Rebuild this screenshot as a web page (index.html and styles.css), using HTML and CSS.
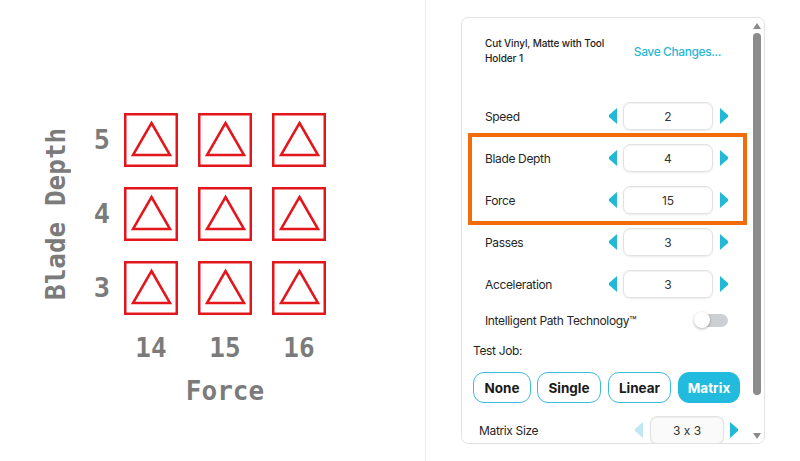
FILE: index.html
```html
<!DOCTYPE html>
<html>
<head>
<meta charset="utf-8">
<link rel="stylesheet" href="styles.css">
</head>
<body>
<div class="app">
  <section class="preview">
    <div class="chart">
      <div class="yaxis">Blade Depth</div>
      <div class="plot">
        <div class="mrow">
          <div class="rnum">5</div>
          <div class="cell"><svg viewBox="0 0 54 54"><rect x="1.25" y="1.25" width="51.5" height="51.5"/><polygon points="27.5,10 46,42 9,42"/></svg></div>
          <div class="cell"><svg viewBox="0 0 54 54"><rect x="1.25" y="1.25" width="51.5" height="51.5"/><polygon points="27.5,10 46,42 9,42"/></svg></div>
          <div class="cell"><svg viewBox="0 0 54 54"><rect x="1.25" y="1.25" width="51.5" height="51.5"/><polygon points="27.5,10 46,42 9,42"/></svg></div>
        </div>
        <div class="mrow">
          <div class="rnum">4</div>
          <div class="cell"><svg viewBox="0 0 54 54"><rect x="1.25" y="1.25" width="51.5" height="51.5"/><polygon points="27.5,10 46,42 9,42"/></svg></div>
          <div class="cell"><svg viewBox="0 0 54 54"><rect x="1.25" y="1.25" width="51.5" height="51.5"/><polygon points="27.5,10 46,42 9,42"/></svg></div>
          <div class="cell"><svg viewBox="0 0 54 54"><rect x="1.25" y="1.25" width="51.5" height="51.5"/><polygon points="27.5,10 46,42 9,42"/></svg></div>
        </div>
        <div class="mrow">
          <div class="rnum">3</div>
          <div class="cell"><svg viewBox="0 0 54 54"><rect x="1.25" y="1.25" width="51.5" height="51.5"/><polygon points="27.5,10 46,42 9,42"/></svg></div>
          <div class="cell"><svg viewBox="0 0 54 54"><rect x="1.25" y="1.25" width="51.5" height="51.5"/><polygon points="27.5,10 46,42 9,42"/></svg></div>
          <div class="cell"><svg viewBox="0 0 54 54"><rect x="1.25" y="1.25" width="51.5" height="51.5"/><polygon points="27.5,10 46,42 9,42"/></svg></div>
        </div>
        <div class="xnums">
          <div class="xnum">14</div>
          <div class="xnum">15</div>
          <div class="xnum">16</div>
        </div>
        <div class="xaxis">Force</div>
      </div>
    </div>
  </section>

  <section class="side">
    <div class="panel">
      <div class="content">
        <div class="header">
          <div class="material">Cut Vinyl, Matte with Tool Holder 1</div>
          <a class="save">Save Changes...</a>
        </div>

        <div class="rows">
          <div class="row">
            <span class="label">Speed</span>
            <span class="arrow left"></span>
            <span class="field">2</span>
            <span class="arrow right"></span>
          </div>
          <div class="row">
            <span class="label">Blade Depth</span>
            <span class="arrow left"></span>
            <span class="field">4</span>
            <span class="arrow right"></span>
          </div>
          <div class="row">
            <span class="label">Force</span>
            <span class="arrow left"></span>
            <span class="field">15</span>
            <span class="arrow right"></span>
          </div>
          <div class="row">
            <span class="label">Passes</span>
            <span class="arrow left"></span>
            <span class="field">3</span>
            <span class="arrow right"></span>
          </div>
          <div class="row">
            <span class="label">Acceleration</span>
            <span class="arrow left"></span>
            <span class="field">3</span>
            <span class="arrow right"></span>
          </div>
        </div>

        <div class="toggle-row">
          <span class="label">Intelligent Path Technology™</span>
          <span class="toggle"><span class="knob"></span></span>
        </div>

        <div class="testjob">Test Job:</div>
        <div class="buttons">
          <button class="btn">None</button>
          <button class="btn">Single</button>
          <button class="btn">Linear</button>
          <button class="btn active">Matrix</button>
        </div>

        <div class="matrix-row">
          <span class="label">Matrix Size</span>
          <span class="arrow left disabled"></span>
          <span class="field wide">3 x 3</span>
          <span class="arrow right"></span>
        </div>
      </div>
      <div class="scrollbar">
        <span class="sarrow up"></span>
        <span class="thumb"></span>
        <span class="sarrow down"></span>
      </div>
    </div>
    <div class="highlight"></div>
  </section>
</div>
</body>
</html>
```

FILE: styles.css
```css
* { box-sizing: border-box; }
html, body { margin: 0; padding: 0; background: #ffffff; }
body {
  width: 800px;
  height: 461px;
  overflow: hidden;
  font-family: "Inter", "Noto Sans", sans-serif;
  font-feature-settings: "calt" 0;
  color: #222;
}

.app { display: flex; height: 461px; }

/* ---------- left preview ---------- */
.preview {
  width: 426px;
  height: 461px;
  border-right: 1px solid #ececec;
  font-family: "DejaVu Sans Mono", monospace;
  font-weight: bold;
  color: #7b7b7b;
  font-size: 26px;
}
.chart { display: flex; padding: 113px 0 0 43px; }
.yaxis {
  writing-mode: vertical-rl;
  transform: rotate(180deg);
  width: 26px;
  height: 201px;
  line-height: 26px;
  text-align: center;
  white-space: nowrap;
}
.plot { display: flex; flex-direction: column; gap: 20px; }
.mrow { display: flex; gap: 20px; align-items: center; height: 54px; }
.rnum { width: 55px; padding-right: 14px; margin-right: -20px; text-align: right; line-height: 26px; font-size: 27px; }
.cell { width: 54px; height: 54px; }
.cell svg { display: block; width: 54px; height: 54px; }
.cell rect { fill: none; stroke: #e3161c; stroke-width: 2.5; }
.cell polygon { fill: none; stroke: #e3161c; stroke-width: 2.5; stroke-linejoin: miter; }
.xnums { display: flex; gap: 20px; padding-left: 55px; line-height: 26px; }
.xnum { width: 54px; text-align: center; }
.xaxis { padding-left: 55px; width: 257px; text-align: center; line-height: 26px; margin-top: -3px; }

/* ---------- right side ---------- */
.side { position: relative; flex: 1; padding: 17px 0 0 35px; }
.panel {
  width: 304px;
  height: 427px;
  border: 1px solid #e2e2e2;
  border-radius: 7px;
  display: flex;
  overflow: hidden;
  background: #fff;
}
.content { flex: 1; min-width: 0; padding: 18px 22px 0 11px; overflow: hidden; }
.header { display: flex; align-items: center; justify-content: space-between; padding: 0 7px 0 12px; }
.material { width: 128px; font-size: 10px; line-height: 15px; color: #1e1e1e; font-weight: 500; letter-spacing: -0.1px; }
.save { color: #2cb7d6; font-size: 12px; font-weight: 500; letter-spacing: -0.4px; }

.rows { margin-top: 29px; padding-left: 12px; }
.row { display: flex; align-items: center; height: 42px; }
.label { flex: 1; font-size: 12px; letter-spacing: -0.35px; color: #262626; }
.arrow { flex-shrink: 0; width: 8px; height: 16px; background: #24b8d8; }
.arrow.left { clip-path: polygon(100% 0, 100% 100%, 0 56%, 0 44%); margin-right: 6px; }
.arrow.right { clip-path: polygon(0 0, 0 100%, 100% 56%, 100% 44%); margin-left: 7px; }
.arrow.disabled { background: #bfe8f2; }
.field {
  flex-shrink: 0;
  width: 90px;
  height: 28px;
  border: 1px solid #e2e2e2;
  border-radius: 7px;
  box-shadow: 0 1px 2px rgba(0,0,0,0.08), inset 0 1px 1px rgba(0,0,0,0.05);
  display: flex;
  align-items: center;
  justify-content: center;
  font-size: 12px;
  color: #333;
}

.toggle-row { display: flex; align-items: center; height: 30px; padding-left: 12px; }
.toggle { position: relative; width: 34px; height: 16px; display: flex; align-items: center; justify-content: flex-end; }
.toggle::before { content: ""; width: 28px; height: 13px; border-radius: 7px; background: #ccd0d5; }
.knob { position: absolute; left: 0; top: 0; width: 16px; height: 16px; border-radius: 50%; background: #fff; box-shadow: 0 1px 3px rgba(0,0,0,0.3); }

.testjob { height: 30px; display: flex; align-items: center; font-size: 12px; letter-spacing: -0.35px; color: #262626; }
.buttons { display: flex; gap: 6px; margin-top: 7px; }
.btn {
  flex-shrink: 0;
  height: 31px;
  border: 1.5px solid #3dbcd7;
  border-radius: 11px;
  background: #fff;
  font-family: "Inter", sans-serif;
  font-weight: 700;
  font-size: 13.5px;
  color: #1a1a1a;
  padding: 0;
}
.btn:nth-child(1) { width: 58px; }
.btn:nth-child(2) { width: 64px; }
.btn:nth-child(3) { width: 63px; margin-left: 1px; }
.btn:nth-child(4) { width: 62px; margin-left: 1px; }
.btn.active { background: #22bbdd; border-color: #22bbdd; color: #fff; }

.matrix-row { display: flex; align-items: center; height: 28px; margin-top: 13px; padding-left: 6px; margin-right: -10px; }
.field.wide { width: 74px; background: #fafafa; }
.matrix-row .arrow.left { margin-right: 7px; }
.matrix-row .arrow.right { margin-left: 6px; }

.scrollbar { width: 14px; display: flex; flex-direction: column; align-items: center; padding: 5px 1px 4px 0; }
.sarrow { width: 0; height: 0; border-left: 4px solid transparent; border-right: 4px solid transparent; }
.sarrow.up { border-bottom: 6px solid #8a8a8a; }
.sarrow.down { border-top: 6px solid #8a8a8a; margin-top: auto; }
.thumb { width: 8px; height: 362px; margin-top: 4px; border-radius: 4px; background: #8c8c8c; }

.highlight {
  position: absolute;
  left: 42px;
  top: 133px;
  width: 279px;
  height: 92px;
  border: 4px solid #f36c0c;
  pointer-events: none;
}
```
